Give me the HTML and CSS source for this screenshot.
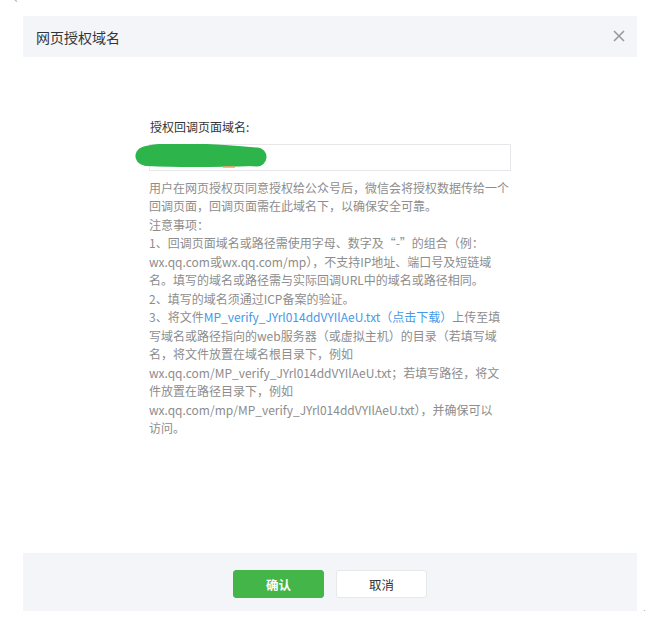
FILE: index.html
```html
<!DOCTYPE html>
<html lang="zh-CN">

<head>
    <meta charset="UTF-8" />
    <title>网页授权域名</title>
    <link rel="stylesheet" href="styles.css">
</head>

<body>
    <div class="mark mark-top">↵</div>

    <div class="wrap">
        <div class="dialog">
            <div class="dialog-hd">
                <h3>网页授权域名</h3>
                <span class="close">
                    <svg width="12" height="12" viewBox="0 0 12 12">
                        <path d="M1 1 L11 11 M11 1 L1 11" stroke="#999" stroke-width="1.6" fill="none" />
                    </svg>
                </span>
            </div>

            <div class="dialog-bd">
                <div class="form">
                    <label class="form-label">授权回调页面域名:</label>
                    <div class="input-box">
                        <input type="text" class="frm-input" />
                        <svg class="scribble" width="132" height="26" viewBox="0 0 132 26">
                            <path d="M10 12 C 30 6, 70 9, 122 13" stroke="#2db44b" stroke-width="19" stroke-linecap="round" fill="none" />
                            <path d="M12 15 C 50 17, 90 16, 120 15" stroke="#2db44b" stroke-width="14" stroke-linecap="round" fill="none" />
                            <path d="M88 23 L100 23" stroke="#e8a06a" stroke-width="1.5" fill="none" />
                        </svg>
                    </div>
                    <div class="tips">
                        <p>用户在网页授权页同意授权给公众号后，微信会将授权数据传给一个回调页面，回调页面需在此域名下，以确保安全可靠。</p>
                        <p>注意事项：</p>
                        <p>1、回调页面域名或路径需使用字母、数字及“-”的组合（例：wx.qq.com或wx.qq.com/mp），不支持IP地址、端口号及短链域名。填写的域名或路径需与实际回调URL中的域名或路径相同。</p>
                        <p>2、填写的域名须通过ICP备案的验证。</p>
                        <p>3、将文件<a href="#">MP_verify_JYrl014ddVYIlAeU.txt（点击下载）</a>上传至填写域名或路径指向的web服务器（或虚拟主机）的目录（若填写域名，将文件放置在域名根目录下，例如wx.qq.com/MP_verify_JYrl014ddVYIlAeU.txt；若填写路径，将文件放置在路径目录下，例如wx.qq.com/mp/MP_verify_JYrl014ddVYIlAeU.txt），并确保可以<span class="nowrap">访问。</span></p>
                    </div>
                </div>
            </div>

            <div class="dialog-ft">
                <button class="btn btn-primary">确认</button>
                <button class="btn btn-default">取消</button>
            </div>
        </div>
        <div class="mark mark-end">↵</div>
    </div>
</body>

</html>
```

FILE: styles.css
```css
body {
    margin: 0;
    font-family: "Noto Sans CJK SC", "Microsoft YaHei", sans-serif;
    background-color: #fff;
    color: #353535;
}

.mark {
    font-family: "DejaVu Sans", sans-serif;
    font-size: 11px;
    color: #aaa;
    line-height: 11px;
}

.mark-top {
    height: 16px;
    margin-left: 14px;
    margin-top: -6px;
    margin-bottom: 6px;
}

.wrap {
    display: flex;
    align-items: flex-end;
    padding-left: 23px;
}

.dialog {
    width: 614px;
}

.mark-end {
    margin-left: 1px;
    margin-bottom: -8px;
}

.dialog-hd {
    height: 41px;
    background-color: #f4f5f9;
    display: flex;
    align-items: center;
    justify-content: space-between;
    padding: 0 12px 0 13px;
}

.dialog-hd h3 {
    margin: 0;
    font-size: 14px;
    font-weight: normal;
    color: #353535;
}

.close {
    display: flex;
    margin-top: -2px;
}

.dialog-bd {
    height: 496px;
    box-sizing: border-box;
    padding-top: 61px;
}

.form {
    width: 362px;
    margin: 0 auto;
    font-size: 12px;
    line-height: 18.5px;
}

.form-label {
    display: block;
    margin-left: 1px;
    color: #353535;
}

.input-box {
    position: relative;
    margin-top: 7px;
}

.frm-input {
    display: block;
    box-sizing: border-box;
    width: 362px;
    height: 27px;
    border: 1px solid #e7e7eb;
    background: #fff;
    padding: 0 8px;
    margin: 0;
}

.scribble {
    position: absolute;
    left: -14px;
    top: 0;
}

.tips {
    margin-top: 8px;
    color: #8d8d8d;
}

.tips p {
    margin: 0;
}

.tips a {
    color: #459ae9;
    text-decoration: none;
}

.nowrap {
    white-space: nowrap;
}

.dialog-ft {
    height: 58px;
    background-color: #f4f5f9;
    display: flex;
    justify-content: center;
    align-items: flex-start;
    gap: 12px;
    padding-top: 17px;
    box-sizing: border-box;
}

.btn {
    width: 91px;
    height: 28px;
    border-radius: 3px;
    font-family: inherit;
    font-size: 12.5px;
    cursor: pointer;
    padding: 0;
}

.btn-primary {
    background-color: #44b549;
    border: 1px solid #44b549;
    color: #fff;
    font-weight: bold;
}

.btn-default {
    background-color: #fff;
    border: 1px solid #e7e8ec;
    color: #353535;
}
```
